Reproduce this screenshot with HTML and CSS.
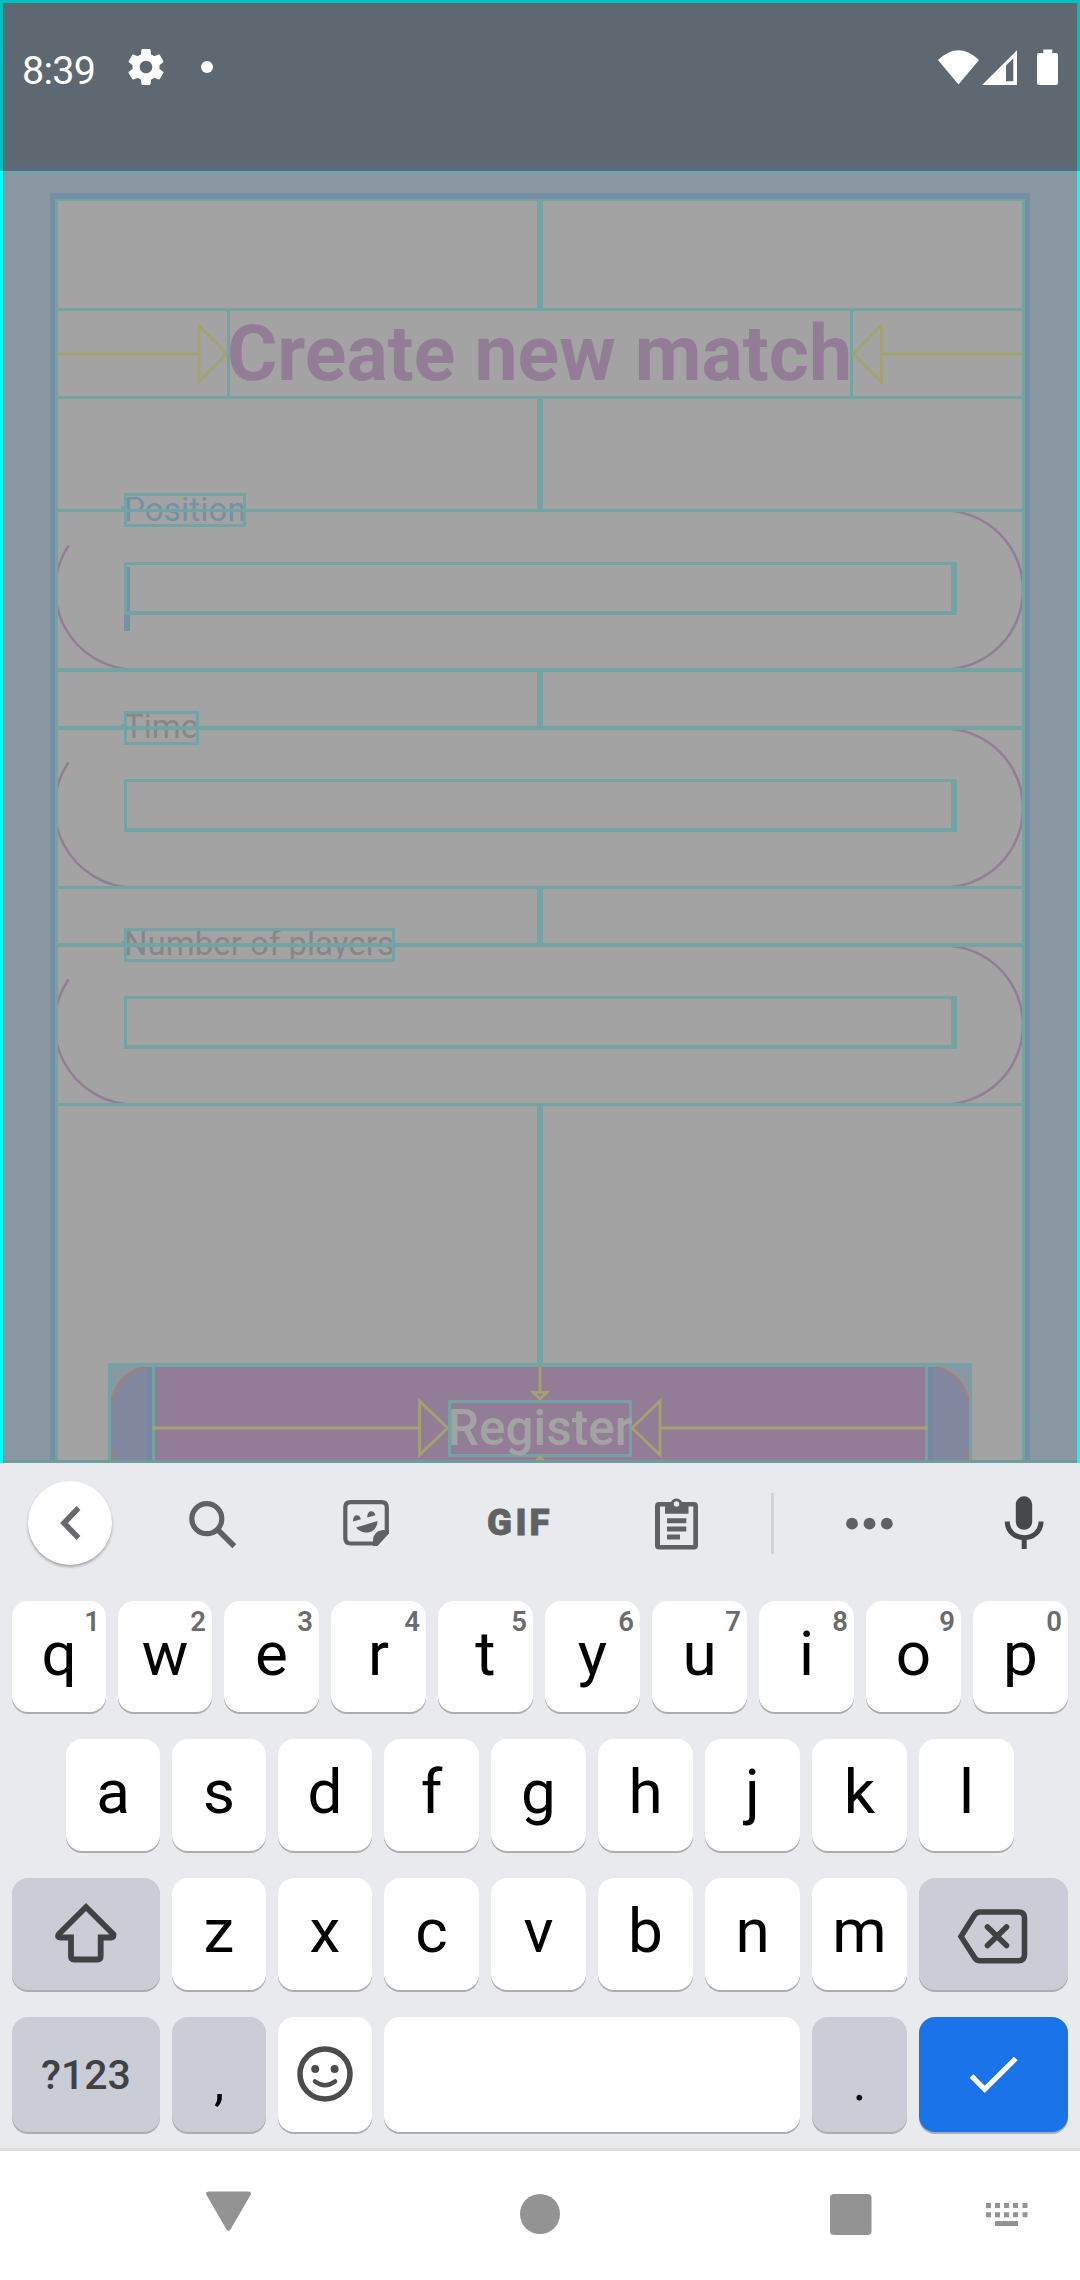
FILE: index.html
```html
<!DOCTYPE html>
<html lang="en">
<head>
<meta charset="utf-8">
<title>Create new match</title>
<link rel="stylesheet" href="styles.css">
</head>
<body>
<div class="phone">
  <header class="status">
    <span class="time">8:39</span>
    <svg class="gear" viewBox="2 2 20 20"><path fill="#fff" d="M19.43 12.98c.04-.32.07-.64.07-.98s-.03-.66-.07-.98l2.11-1.65c.19-.15.24-.42.12-.64l-2-3.46c-.12-.22-.39-.3-.61-.22l-2.49 1c-.52-.4-1.08-.73-1.69-.98l-.38-2.65C14.46 2.18 14.25 2 14 2h-4c-.25 0-.46.18-.49.42l-.38 2.65c-.61.25-1.17.59-1.69.98l-2.49-1c-.23-.09-.49 0-.61.22l-2 3.46c-.13.22-.07.49.12.64l2.11 1.65c-.04.32-.07.65-.07.98s.03.66.07.98l-2.11 1.65c-.19.15-.24.42-.12.64l2 3.46c.12.22.39.3.61.22l2.49-1c.52.4 1.08.73 1.69.98l.38 2.65c.03.24.24.42.49.42h4c.25 0 .46-.18.49-.42l.38-2.65c.61-.25 1.17-.59 1.69-.98l2.49 1c.23.09.49 0 .61-.22l2-3.46c.12-.22.07-.49-.12-.64l-2.11-1.65zM12 15.5c-1.93 0-3.5-1.57-3.5-3.5s1.57-3.5 3.5-3.5 3.5 1.57 3.5 3.5-1.57 3.5-3.5 3.5z"/></svg>
    <span class="dot"></span>
    <svg class="signals" viewBox="938 48 120 38">
      <g fill="#fff"><path d="M938 60Q958.500 40.500 979 60L958.500 84.500Z"/>
      <path fill-rule="evenodd" d="M982 85L1017 50.300V85ZM1006 65.500V81.300H1013.300V58.500Z"/>
      <path d="M1043.300 49.500h9V53h3.700a2 2 0 0 1 2 2V83a2 2 0 0 1-2 2h-17a2 2 0 0 1-2-2V55a2 2 0 0 1 2-2h4.300Z"/></g>
    </svg>
  </header>

  <main class="app">
    <div class="viewport">
      <div class="card"><div class="content">
        <div class="gap gap-top"></div>
        <div class="title-row">
          <svg class="arrow" viewBox="58 309 169 90"><path d="M58 354H199M199 325.500V382L226.500 354Z"/></svg>
          <h1 class="title">Create new match</h1>
          <svg class="arrow" viewBox="853 309 169 90"><path d="M1022 354H881.500M881.500 325.500V382L853.500 354Z"/></svg>
        </div>
        <div class="gap gap-title"></div>
        <div class="field first">
          <svg class="outline" viewBox="58 0 964 163"><path d="M68.500 36.500A80 80 0 0 0 136 160.500M943.500 1.500A79.500 79.500 0 0 1 943.500 160.500"/></svg>
          <span class="label active position">Position</span>
          <div class="input"></div>
          <span class="caret"></span>
        </div>
        <div class="gap gap-field"></div>
        <div class="field">
          <svg class="outline" viewBox="58 0 964 163"><path d="M68.500 36.500A80 80 0 0 0 136 161.500M943.500 2.500A79.500 79.500 0 0 1 943.500 161.500"/></svg>
          <span class="label time-label">Time</span>
          <div class="input"></div>
        </div>
        <div class="gap gap-field"></div>
        <div class="field">
          <svg class="outline" viewBox="58 0 964 163"><path d="M68.500 36.500A80 80 0 0 0 136 161.500M943.500 2.500A79.500 79.500 0 0 1 943.500 161.500"/></svg>
          <span class="label players">Number of players</span>
          <div class="input"></div>
        </div>
        <div class="gap gap-button"></div>
        <div class="button">
          <svg class="side" viewBox="111 1367 41 93">
            <path d="M111 1405C113 1386 126 1369 148 1367H152V1460H111Z" fill="#8287a0"/>
            <rect x="146.500" y="1367" width="5.500" height="93" fill="#7587a1"/>
            <path d="M111 1404C114 1386 126 1369 147 1367M111.500 1450Q111.500 1456 113 1461" fill="none" stroke="#a37f7c" stroke-width="2.500"/>
          </svg>
          <div class="face">
            <svg class="pin" viewBox="530 1367 20 33"><path d="M540 1367V1391.500M533 1392.300H547L540 1399Z"/></svg>
            <div class="face-row">
              <svg class="arrow" viewBox="155 1400 294 57"><path d="M152 1428H420.500M420.500 1401V1455L448.500 1428Z"/></svg>
              <span class="register">Register</span>
              <svg class="arrow" viewBox="632 1400 293 57"><path d="M928 1428H660M660 1401V1455L632 1428Z"/></svg>
            </div>
            <svg class="tip" viewBox="534 1457 12 6"><path d="M540 1455L546 1461H534Z" fill="#a3a370"/></svg>
          </div>
          <svg class="side" viewBox="928 1367 41 93">
            <path d="M969 1405C967 1386 954 1369 932 1367H928V1460H969Z" fill="#8287a0"/>
            <rect x="928" y="1367" width="5.500" height="93" fill="#7587a1"/>
            <path d="M969 1404C966 1386 954 1369 933 1367M968.500 1450Q968.500 1456 967 1461" fill="none" stroke="#a37f7c" stroke-width="2.500"/>
          </svg>
        </div>
      </div></div>
      <span class="mark"></span>
    </div>
  </main>

  <section class="keyboard">
    <div class="toolbar">
      <span class="back"><svg viewBox="28 1481 84 84"><path d="M78.500 1508L64 1523L78.500 1538" fill="none" stroke="#68696c" stroke-width="5.500"/></svg></span>
      <svg class="tools" viewBox="112 1481 968 84">
        <g fill="none" stroke="#5f6163">
          <circle cx="206.800" cy="1518.700" r="15" stroke-width="5.200"/>
          <path d="M218 1530L220.500 1532.500L234.300 1546.300" stroke-width="5.600"/>
          <path d="M377 1543.500H350.500Q345.300 1543.500 345.300 1538V1507.500Q345.300 1502.200 350.500 1502.200H381.500Q386.800 1502.200 386.800 1507.500V1532Z" stroke-width="4.200"/>
        </g>
        <g fill="#5f6163">
          <path d="M377 1546L389 1533.500V1530H383Q373 1531 373 1541V1546Z"/>
          <path d="M353 1521.500C353 1513 360 1514 361 1519.300ZM367.200 1517.500C367.200 1509 374.500 1510 375.500 1515.300Z"/>
          <path d="M356 1527.500L377.500 1521C377 1534.500 362 1535.500 356 1527.500Z"/>
          <path fill-rule="evenodd" d="M671 1502A6 6 0 0 1 682 1502H694Q698 1502 698 1506V1545.500Q698 1549.500 694 1549.500H659Q655 1549.500 655 1545.500V1506Q655 1502 659 1502ZM660 1506.500V1545H693.300V1506.500H688.500V1513.700H665V1506.500ZM676.500 1501.300A2.700 2.700 0 1 0 676.500 1506.700A2.700 2.700 0 1 0 676.500 1501.300Z"/>
          <path d="M667 1518.200h19.300v5h-19.300zM667 1526.500h19.300v5h-19.300zM667 1534.500h13v5h-13z"/>
          <circle cx="852" cy="1523.700" r="5.900"/><circle cx="869.500" cy="1523.700" r="5.900"/><circle cx="886.800" cy="1523.700" r="5.900"/>
        </g>
        <rect x="771" y="1493" width="2.800" height="61" fill="#cfd1d5"/>
        <rect x="1015.800" y="1496.300" width="16.400" height="33.500" rx="8.200" fill="#47484a"/>
        <path d="M1007.300 1521.500C1007.300 1543 1041 1543 1041 1521.500M1024.200 1538V1549" fill="none" stroke="#47484a" stroke-width="5"/>
        <text class="gif" x="487 515.500 529.500" y="1535">GIF</text>
      </svg>
    </div>
    <div class="row r1">
      <span class="key slim">q<i>1</i></span><span class="key slim">w<i>2</i></span><span class="key">e<i>3</i></span><span class="key">r<i>4</i></span><span class="key">t<i>5</i></span><span class="key">y<i>6</i></span><span class="key">u<i>7</i></span><span class="key">i<i>8</i></span><span class="key">o<i>9</i></span><span class="key">p<i>0</i></span>
    </div>
    <div class="row r2">
      <span class="key slim">a</span><span class="key slim">s</span><span class="key slim">d</span><span class="key">f</span><span class="key">g</span><span class="key">h</span><span class="key">j</span><span class="key">k</span><span class="key">l</span>
    </div>
    <div class="row r3">
      <span class="key shift gray"><svg viewBox="12 1878 148 112"><path d="M86 1907L113.500 1934.500Q114 1937.500 111.500 1937.500H100.700V1956Q100.700 1959.500 97.500 1959.500H74Q71 1959.500 71 1956V1937.500H60Q57 1937.500 58.500 1934.500Z" fill="none" stroke="#404143" stroke-width="5.800"/></svg></span>
      <span class="key slim">z</span><span class="key slim">x</span><span class="key">c</span><span class="key">v</span><span class="key">b</span><span class="key">n</span><span class="key">m</span>
      <span class="key wide gray"><svg viewBox="919 1878 149 112"><g fill="none" stroke="#404143" stroke-width="5.600"><path d="M980 1912H1018.500Q1024.500 1912 1024.500 1918V1954.500Q1024.500 1960.700 1018.500 1960.700H980Q976.500 1960.700 974.500 1957.500L961 1936.500L974.500 1915Q976.500 1912 980 1912Z"/><path d="M987.500 1927L1006.500 1945.500M1006.500 1927L987.500 1945.500" stroke-linecap="round"/></g></svg></span>
    </div>
    <div class="row r4">
      <span class="key shift gray mode">?123</span>
      <span class="key slim gray punct">,</span>
      <span class="key slim"><svg viewBox="278 2017 94 115"><g fill="none" stroke="#4b4c4e"><circle cx="325" cy="2074" r="25" stroke-width="5.500"/><path d="M315 2081.500Q325 2089 335 2081.500" stroke-width="4.600" stroke-linecap="round"/></g><g fill="#4b4c4e"><circle cx="315.200" cy="2069" r="4"/><circle cx="334.600" cy="2069" r="4"/></g></svg></span>
      <span class="key space"></span>
      <span class="key gray punct">.</span>
      <span class="key wide enter"><svg viewBox="919 2017 149 115"><path d="M971.500 2076L984.700 2089.300L1015.800 2058.500" fill="none" stroke="#fff" stroke-width="5.200"/></svg></span>
    </div>
  </section>

  <nav class="nav">
    <svg viewBox="0 2151 1080 129" fill="#939393">
      <path d="M208.500 2191.500H248.500Q252 2192 250.500 2195L230.500 2229.500Q228.500 2232 226.500 2229.500L206.500 2195Q205 2192 208.500 2191.500Z"/>
      <circle cx="540" cy="2214" r="20"/>
      <rect x="830" y="2194" width="41.500" height="41" rx="4"/>
      <path d="M986 2203h5v5h-5zM995 2203h5v5h-5zM1004 2203h5v5h-5zM1013 2203h5v5h-5zM1022.500 2203h5v5h-5zM986 2212.300h5v5h-5zM995 2212.300h5v5h-5zM1004 2212.300h5v5h-5zM1013 2212.300h5v5h-5zM1022.500 2212.300h5v5h-5zM995 2221h23v5h-23z"/>
    </svg>
  </nav>
</div>
</body>
</html>
```
FILE: styles.css
```css
:root {
  --teal: #73a4a3;
  --olive: #a3a370;
  --mauve: #937d96;
  --slate: #8a97a3;
}

* { box-sizing: border-box; }

body {
  margin: 0;
  font-family: Roboto, "Noto Sans", sans-serif;
}

svg { display: block; }

.phone {
  width: 1080px;
  height: 2280px;
  display: flex;
  flex-direction: column;
  overflow: hidden;
}

/* status bar */
.status {
  flex: none;
  height: 171px;
  display: flex;
  align-items: flex-start;
  padding: 45px 19px 0 19px;
  border: 3px solid #00bfbf;
  border-bottom: 0;
  background: linear-gradient(#5e6870 0 163px, #586a7b 163px);
}
.time {
  width: 75px;
  font-size: 39.5px;
  line-height: 45px;
  letter-spacing: -.7px;
  color: #fff;
}
.gear { width: 36px; height: 36px; margin: 1px 0 0 31px; }
.dot {
  width: 12px;
  height: 12px;
  margin: 13px 0 0 37px;
  border-radius: 50%;
  background: #fff;
}
.signals { width: 120px; height: 38px; margin-left: auto; }

/* app window with layout bounds */
.app {
  flex: none;
  height: 1292px;
  border: solid #0ff;
  border-width: 0 3px;
}
.viewport {
  position: relative;
  height: 1292px;
  padding: 19px 47px 0;
  overflow: hidden;
  border-top: 3px solid var(--teal);
  border-bottom: 3px solid #6f9c9c;
  background: var(--slate);
}
.card {
  height: 1400px;
  border: solid #758fa4;
  border-width: 6px 5px 0;
}
.content {
  height: 1394px;
  border: solid var(--teal);
  border-width: 2px 3px 0;
  background: #a3a3a3;
}
.gap {
  background: linear-gradient(var(--teal), var(--teal)) center / 6px 100% no-repeat;
}
.gap-top { height: 107px; }
.gap-title { height: 110px; }
.gap-field { height: 54px; }
.gap-button { height: 257px; }

.title-row {
  height: 91px;
  display: flex;
  border: solid var(--teal);
  border-width: 3px 0;
}
.arrow {
  flex: none;
  overflow: visible;
  fill: none;
  stroke: var(--olive);
  stroke-width: 2.8px;
}
.title-row .arrow { width: 169px; height: 90px; margin-top: -2.5px; }
.title {
  flex: none;
  width: 626px;
  margin: 0;
  padding-right: 1px;
  display: flex;
  justify-content: center;
  border: solid var(--teal);
  border-width: 0 3px;
  font-size: 77px;
  font-weight: 700;
  line-height: 86px;
  white-space: nowrap;
  color: var(--mauve);
}

.field {
  position: relative;
  height: 163px;
  padding: 53px 65px 0 66px;
}
.field::after {
  content: "";
  position: absolute;
  inset: 0;
  border: solid var(--teal);
  border-width: 4px 0 3px;
}
.field.first::after { border-width: 3px 0 4px; }
.outline {
  position: absolute;
  inset: 0;
  width: 964px;
  height: 163px;
  fill: none;
  stroke: var(--mauve);
  stroke-width: 2.5px;
}
.label {
  position: absolute;
  left: 66px;
  top: -15px;
  height: 34px;
  font-size: 33px;
  line-height: 32px;
  white-space: nowrap;
  color: #878787;
}
.label.active { top: -16px; line-height: 33px; color: #7690a4; }
.position { width: 122px; letter-spacing: .2px; }
.time-label { width: 75px; }
.players { width: 271px; }
.label::after {
  content: "";
  position: absolute;
  inset: 0;
  border: 3px solid var(--teal);
}
.label::before {
  content: "";
  position: absolute;
  left: -3px;
  top: 13px;
  width: 4px;
  height: 4px;
  background: var(--teal);
}
.input {
  position: relative;
  z-index: 1;
  height: 53px;
  border: solid var(--teal);
  border-width: 3px 6px 4px 3px;
}
.caret {
  position: absolute;
  left: 66px;
  top: 58px;
  width: 6px;
  height: 64px;
  background: #7690a4;
}

.button {
  width: 864px;
  height: 170px;
  margin-left: 50px;
  display: flex;
  border: solid var(--teal);
  border-width: 4px 3px;
  background: var(--slate);
  box-shadow: 0 14px 10px -6px rgba(0, 0, 0, .14);
}
.side { flex: none; width: 41px; height: 93px; }
.face {
  width: 776px;
  display: flex;
  flex-direction: column;
  align-items: center;
  border: solid var(--teal);
  border-width: 0 3px;
  background: var(--mauve);
}
.pin {
  flex: none;
  width: 20px;
  height: 33px;
  fill: none;
  stroke: var(--olive);
  stroke-width: 2.8px;
}
.tip { flex: none; width: 12px; height: 6px; overflow: visible; }
.face-row { flex: none; width: 770px; height: 57px; display: flex; }
.face-row .arrow { width: 293px; height: 57px; }
.register {
  flex: none;
  width: 184px;
  display: flex;
  justify-content: center;
  border: 3px solid var(--teal);
  font-size: 49.5px;
  font-weight: 500;
  line-height: 51px;
  color: #a3a3a3;
}
.mark {
  position: absolute;
  left: 1030px;
  top: 1242px;
  width: 6px;
  height: 6px;
  background: var(--teal);
}

/* keyboard */
.keyboard {
  flex: none;
  height: 688px;
  border-bottom: 3px solid #dddee0;
  background: #e8eaed;
}
.toolbar {
  height: 138px;
  display: flex;
  padding: 18px 0 0 28px;
}
.back {
  width: 84px;
  height: 84px;
  border-radius: 50%;
  background: #fff;
  box-shadow: 0 2px 3px rgba(0, 0, 0, .3);
}
.tools { width: 968px; height: 84px; }
.gif {
  font-size: 36.5px;
  font-weight: 900;
  fill: #5f6163;
  stroke: #5f6163;
  stroke-width: .8px;
}
.row {
  display: flex;
  justify-content: center;
  gap: 12px;
  padding: 0 12px;
}
.r1 { height: 111px; }
.r2 { height: 112px; margin-top: 27px; }
.r3 { height: 112px; margin-top: 27px; }
.r4 { height: 115px; margin-top: 27px; }
.key {
  position: relative;
  flex: none;
  width: 95px;
  display: flex;
  justify-content: center;
  align-items: center;
  padding-bottom: 6px;
  border-radius: 16px;
  background: #fff;
  box-shadow: 0 2px 0 #acadaf;
  font-size: 62px;
  line-height: 72px;
  color: #000;
}
.key i {
  position: absolute;
  top: 5px;
  right: 6px;
  font-size: 27.5px;
  font-weight: 600;
  font-style: normal;
  line-height: 32px;
  color: #6a6b6d;
}
.key svg { width: 100%; height: 100%; }
.key:has(svg) { padding-bottom: 0; }
.key.slim { width: 94px; }
.key.shift { width: 148px; }
.key.wide { width: 149px; }
.key.space { width: 416px; }
.gray { background: #cbcdd6; }
.punct { padding: 16px 0 0; font-size: 52px; }
.mode {
  padding: 0;
  font-size: 41px;
  font-weight: 500;
  color: #404143;
}
.enter { background: #1a73e8; }

/* system navigation */
.nav { flex: none; height: 129px; background: #fff; }
.nav svg { width: 1080px; height: 129px; }
```
